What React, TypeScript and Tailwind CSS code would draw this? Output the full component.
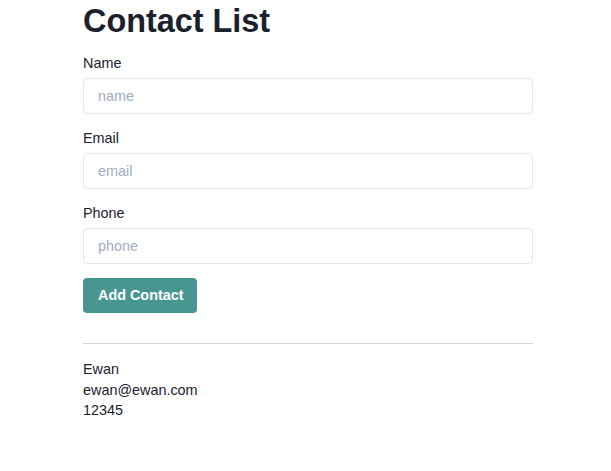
import React from "react";

export default function App() {
  return (
    <div
      className="ml-[83px] w-[450px] text-[#1a202c]"
      style={{ fontFamily: '"Liberation Sans", Arial, sans-serif' }}
    >
      <h1 className="m-0 text-[32.4px] font-bold leading-[42px]">Contact List</h1>
      <form className="mt-[11px] flex flex-col">
        {[
          ["Name", "name"],
          ["Email", "email"],
          ["Phone", "phone"],
        ].map(([label, ph]) => (
          <div key={label} className="mb-[14px] flex flex-col">
            <label className="mb-[4px] block text-[14.4px] leading-[21px]">{label}</label>
            <input
              placeholder={ph}
              className="h-[36px] w-full rounded-[4px] border border-[#e2e8f0] bg-white px-[14px] text-[14.4px] outline-none placeholder:text-[#a0aec0]"
            />
          </div>
        ))}
        <div>
          <button
            type="button"
            className="h-[35px] rounded-[4px] bg-[#489692] pl-[15px] pr-[13px] text-[14.4px] font-bold text-white"
          >
            Add Contact
          </button>
        </div>
      </form>
      <hr className="mt-[30px] border-0 border-t border-[#d4d4d4]" />
      <div className="mt-[15px] text-[14.4px] leading-[20.5px]">
        <div>Ewan</div>
        <div>ewan@ewan.com</div>
        <div>12345</div>
      </div>
    </div>
  );
}
